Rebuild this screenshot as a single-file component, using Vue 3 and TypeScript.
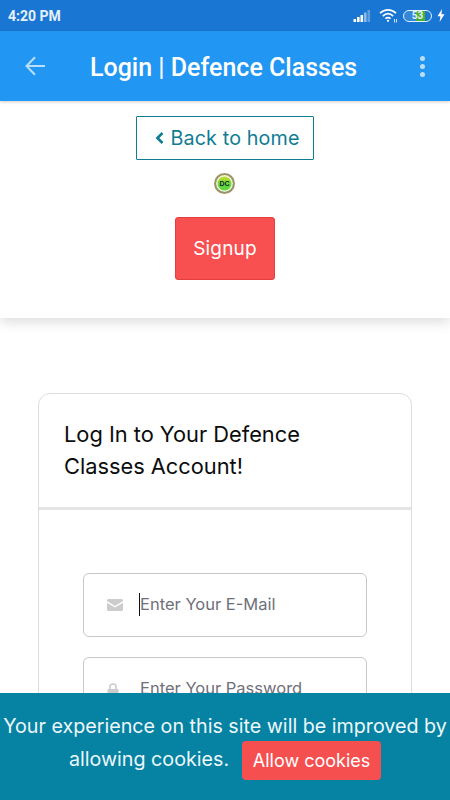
<script setup lang="ts">
const title: string = 'Login | Defence Classes'
</script>

<template>
  <div class="screen">
    <div class="status">
      <span class="time">4:20 PM</span>
      <div class="status-icons">
        <svg width="18" height="14" viewBox="0 0 18 14">
          <rect x="0.5" y="10" width="2.6" height="3" fill="#fff" />
          <rect x="4" y="8" width="2.6" height="5" fill="#fff" />
          <rect x="7.5" y="6" width="2.6" height="7" fill="#fff" />
          <rect x="11" y="3.5" width="2.6" height="9.5" fill="#fff" opacity=".5" />
          <rect x="14.5" y="1" width="2.6" height="12" fill="#fff" opacity=".3" />
        </svg>
        <svg class="wifi" width="19" height="15" viewBox="0 0 19 15" fill="none" stroke="#fff" stroke-width="1.7">
          <path d="M1 5.2C5.8 .8 12.2 .8 17 5.2" />
          <path d="M3.8 8C7 5.2 11 5.2 14.2 8" />
          <path d="M6.4 10.600C8 9.300 10 9.300 11.600 10.600" />
          <circle cx="9" cy="12.800" r="1.100" fill="#fff" stroke="none" />
          <path d="M15.500 11v3.500M17.500 11v3.500" stroke-width="1" opacity=".8" />
        </svg>
        <div class="battery">
          <div class="battery-fill"></div>
          <span>53</span>
        </div>
        <svg width="8" height="13" viewBox="0 0 8 13"><path d="M5 0 0.5 7.200H3.400L2.600 13 7.500 5.200H4.500Z" fill="#fff" /></svg>
      </div>
    </div>

    <header class="appbar">
      <svg class="back" width="20" height="20" viewBox="0 0 20 20" fill="none" stroke="#bbdefb" stroke-width="2">
        <path d="M20 10H1.500" />
        <path d="M10 1.200 1.500 10l8.500 8.800" />
      </svg>
      <h1>{{ title }}</h1>
      <div class="dots"><i></i><i></i><i></i></div>
    </header>

    <section class="top">
      <a class="home">
        <svg width="9" height="12" viewBox="0 0 9 12" fill="none" stroke="#0e7c93" stroke-width="2.600">
          <path d="M7.500 1 2.400 6l5.100 5" />
        </svg>
        <span>Back to home</span>
      </a>
      <div class="logo"><span>DC</span></div>
      <button class="signup">Signup</button>
    </section>

    <section class="card">
      <h2>Log In to Your Defence<br />Classes Account!</h2>
      <div class="form">
        <div class="field">
          <svg class="icon" width="16" height="12" viewBox="0 0 16 12">
            <path d="M1.500 0h13A1.500 1.500 0 0 1 16 1.500v.6L8 7 0 2.100v-.6A1.500 1.500 0 0 1 1.500 0Z" fill="#ccc" />
            <path d="M0 3.700 8 8.600l8-4.900V10.500A1.500 1.500 0 0 1 14.500 12h-13A1.500 1.500 0 0 1 0 10.500Z" fill="#ccc" />
          </svg>
          <span class="placeholder caret">Enter Your E-Mail</span>
        </div>
        <div class="field">
          <svg class="icon lock" width="12" height="13" viewBox="0 0 12 13">
            <rect x="0.500" y="6" width="11" height="7" rx="1.200" fill="#ccc" />
            <path d="M3 6.500V4a3 3 0 0 1 6 0v2.500" fill="none" stroke="#ccc" stroke-width="1.600" />
          </svg>
          <span class="placeholder">Enter Your Password</span>
        </div>
      </div>
    </section>

    <aside class="cookies">
      <div class="line">Your experience on this site will be improved by</div>
      <div class="line row">
        <span>allowing cookies.</span>
        <button>Allow cookies</button>
      </div>
    </aside>
  </div>
</template>

<style>
html,
body {
  margin: 0;
  background: #fff;
  overflow: hidden;
}
</style>

<style scoped>
.screen {
  width: 450px;
  height: 800px;
  overflow: hidden;
  font-family: Inter, "Open Sans", sans-serif;
  color: #111;
  background: #fff;
}
.status {
  height: 31px;
  background: #1976d2;
  display: flex;
  align-items: center;
  justify-content: space-between;
  padding: 0 5px 0 8px;
  box-sizing: border-box;
}
.time {
  font: 700 14px Roboto, sans-serif;
  color: #e6f0fa;
}
.status-icons {
  display: flex;
  align-items: center;
  gap: 5px;
}
.wifi {
  margin-left: 3px;
}
.battery {
  position: relative;
  width: 29px;
  height: 12px;
  box-sizing: border-box;
  border: 1px solid #e3f2fd;
  border-radius: 7px;
  overflow: hidden;
  display: flex;
  align-items: center;
  justify-content: center;
  font: 700 10px Roboto, sans-serif;
  color: #e3f2fd;
}
.battery-fill {
  position: absolute;
  left: 0;
  top: 0;
  bottom: 0;
  width: 76%;
  background: linear-gradient(90deg, rgba(255, 255, 255, 0.12) 0 58%, #4caf2f 58% 100%);
}
.battery span {
  position: relative;
}
.appbar {
  position: relative;
  z-index: 2;
  height: 70px;
  background: #2196f3;
  display: flex;
  align-items: center;
  padding: 0 25px 0 25px;
  box-shadow: 0 1px 3px rgba(0, 0, 0, 0.2);
}
.back {
  flex: none;
}
h1 {
  margin: 3px 0 0 45px;
  flex: 1;
  font: 500 25px Roboto, sans-serif;
  color: #fff;
  white-space: nowrap;
}
.dots {
  display: flex;
  flex-direction: column;
  gap: 3px;
}
.dots i {
  width: 5px;
  height: 5px;
  border-radius: 50%;
  background: #bbdefb;
}
.top {
  height: 217px;
  box-sizing: border-box;
  padding-top: 15px;
  display: flex;
  flex-direction: column;
  align-items: center;
  box-shadow: 0 4px 12px rgba(0, 0, 0, 0.14);
}
.home {
  width: 178px;
  height: 44px;
  box-sizing: border-box;
  border: 1px solid #0e7c93;
  border-radius: 1px;
  display: flex;
  align-items: center;
  justify-content: center;
  gap: 6px;
  padding-left: 5px;
  color: #0e7c93;
  font-size: 19.7px;
  letter-spacing: 0.15px;
  white-space: nowrap;
}
.logo {
  margin: 13px 1px 0 0;
  width: 21px;
  height: 21px;
  box-sizing: border-box;
  border: 2px solid #9c9468;
  border-radius: 50%;
  background: linear-gradient(#d9e02c, #5fd93a 60%);
  display: flex;
  align-items: center;
  justify-content: center;
  box-shadow: inset 0 0 0 1.500px #f4f4e8;
}
.logo span {
  font: 700 7px "Liberation Sans", sans-serif;
  color: #123;
}
.signup {
  margin-top: 23px;
  width: 100px;
  height: 63px;
  border: 1px solid #e33d3d;
  border-radius: 3px;
  background: #f84f50;
  color: #fff;
  font: 400 19px Inter, sans-serif;
  letter-spacing: 0.2px;
}
.card {
  margin: 75px 38px 0;
  box-sizing: border-box;
  border: 1px solid #dedede;
  border-radius: 12px;
}
h2 {
  margin: 0;
  padding: 24px 25px 25px;
  font: 400 21.8px/32px Inter, sans-serif;
  color: #0c0c0c;
  border-bottom: 3px solid #e4e4e4;
}
.form {
  padding: 63px 44px;
  display: flex;
  flex-direction: column;
  gap: 20px;
}
.field {
  height: 64px;
  box-sizing: border-box;
  border: 1px solid #c8c8c8;
  border-radius: 6px;
  display: flex;
  align-items: center;
  padding-left: 23px;
}
.icon {
  flex: none;
  margin-right: 17px;
}
.lock {
  margin-right: 21px;
}
.placeholder {
  margin-top: -2px;
  font-size: 16.5px;
  line-height: 23px;
  color: #70707a;
  white-space: nowrap;
}
.caret {
  border-left: 1px solid #111;
  margin-left: -1px;
}
.cookies {
  position: fixed;
  left: 0;
  right: 0;
  bottom: 0;
  height: 107px;
  z-index: 5;
  background: #0682a3;
  box-sizing: border-box;
  padding-top: 17px;
  color: #eef8fb;
  font-size: 19.7px;
  line-height: 33px;
}
.line {
  text-align: center;
  white-space: nowrap;
}
.row {
  display: flex;
  align-items: center;
  justify-content: center;
  gap: 13px;
  height: 33px;
}
.cookies button {
  margin-top: 2px;
  height: 39px;
  width: 139px;
  border: 0;
  border-radius: 4px;
  background: #f64f50;
  color: #fff;
  font: 400 18px Inter, sans-serif;
}
</style>
